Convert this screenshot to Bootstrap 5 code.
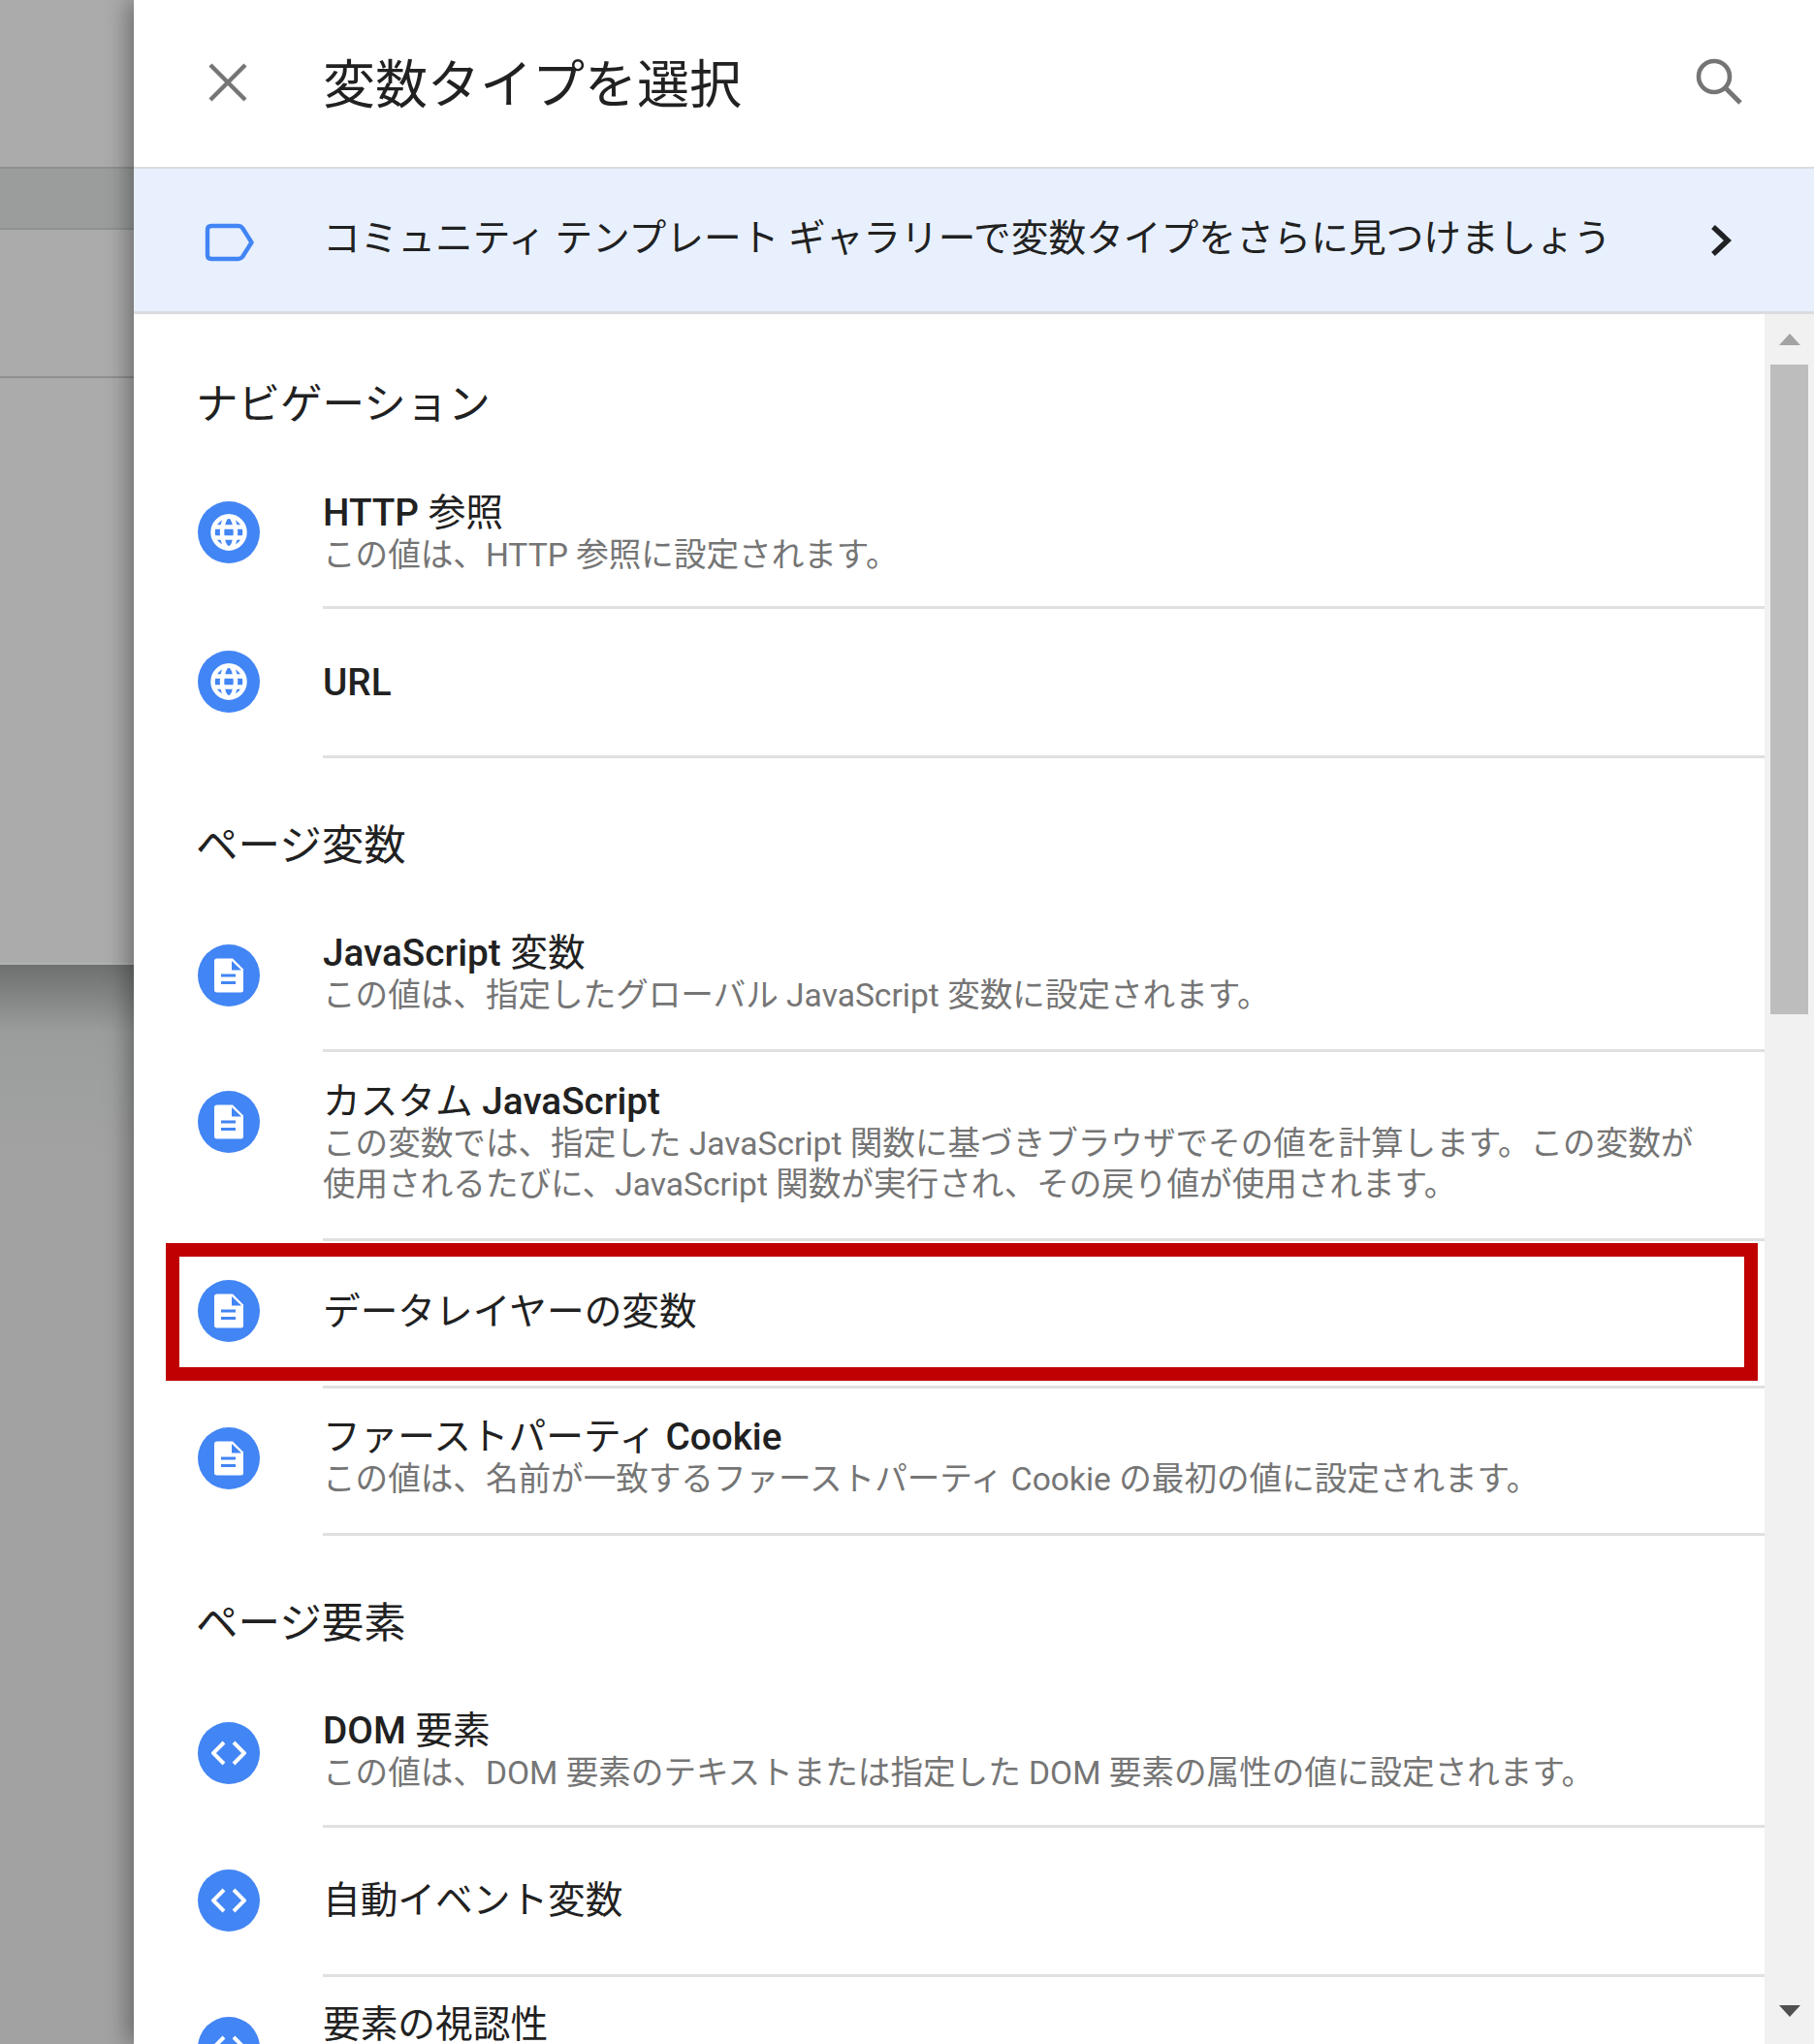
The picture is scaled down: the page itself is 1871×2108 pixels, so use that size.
<!DOCTYPE html>
<html lang="ja">
<head>
<meta charset="utf-8">
<title>変数タイプを選択</title>
<link rel="stylesheet" href="https://cdn.jsdelivr.net/npm/bootstrap@5.3.0/dist/css/bootstrap.min.css">
<style>
html,body{height:2108px;overflow:hidden}
body{font-family:Roboto,"Noto Sans CJK JP",sans-serif;color:#212121;background:#a5a5a5}
.stage{height:2108px;width:1871px}
.bd-pane{width:138px;flex:none}
.bd-top{height:172px;background:#ababab}
.bd-band{height:65px;background:#9b9d9d;border-top:2px solid #8f9090;border-bottom:2px solid #8f9090}
.bd-mid{height:153px;background:#ababab;border-bottom:2px solid #8f8f8f}
.bd-low{height:605px;background:#ababab;border-bottom:2px solid #afb2b0}
.bd-rest{flex:1 1 auto;background:linear-gradient(#6e7070,#9b9d9d 70px,#a2a2a2 200px)}
.panel{width:1733px;flex:none;background:#fff;box-shadow:-6px 0 22px rgba(0,0,0,.36);position:relative}
.head-bar{height:172px;flex:none}
.x-slot{width:195px;padding-left:77px;flex:none;padding-bottom:3px}
.sheet-title{font-size:54px;line-height:70px;font-weight:400;margin:0;padding-top:5px;color:#212121}
.search-slot{margin-right:74px;padding-bottom:5px}
.promo{height:152px;flex:none;background:#e8f0fe;border-top:2px solid #dadce0;border-bottom:3px solid #dadce0}
.promo-ico{width:195px;padding-left:73px;flex:none;padding-top:4px}
.promo-text{font-size:38.7px;line-height:50px;color:#212121;padding-bottom:4px}
.promo-go{margin-right:84px}
.list-pane{width:1682px;flex:none;overflow:hidden}
.sec-head{font-size:43.5px;line-height:56px;margin:0;font-weight:400;padding-left:64px;color:#212121}
.sh1{height:150px;padding-top:66px}
.sh2{height:149px;padding-top:63px}
.sh3{height:147px;padding-top:63px}
.v-row{position:relative;height:154px}
.v-ico{width:195px;padding-left:66px;flex:none}
.ic-disc{width:64px;height:64px;border-radius:50%;background:#4285f4}
.v-body{flex:1 1 auto;border-bottom:3px solid #e0e0e3}
.v-name{font-size:38.7px;line-height:46px}
.lat{font-weight:500}
.v-desc{font-size:33.6px;line-height:42px;color:#757575;padding-right:70px}
.tall{height:195px}
.r1 .v-ico{padding-top:43px}.r1 .v-body{padding-top:32px}
.r2 .v-ico{padding-top:43px}.r2 .v-body{padding-top:53px}
.r3 .v-ico{padding-top:43px}.r3 .v-body{padding-top:29px}
.r4 .v-ico{padding-top:40px}.r4 .v-body{padding-top:28px}
.r5{height:152px}.r5 .v-ico{padding-top:40px}.r5 .v-body{padding-top:50px}
.r6{height:152px}.r6 .v-ico{padding-top:40px}.r6 .v-body{padding-top:27px}
.r7 .v-ico{padding-top:45px}.r7 .v-body{padding-top:31px}
.r8 .v-ico{padding-top:43px}.r8 .v-body{padding-top:52px}
.r9 .v-ico{padding-top:41px}.r9 .v-body{padding-top:26px}
.red-box{position:absolute;left:33px;top:2px;width:1642px;height:142px;border:14px solid #c00000;pointer-events:none}
.sbar{width:51px;flex:none;background:#f1f1f1}
.sb-up{height:52px;flex:none}
.sb-thumb{height:670px;width:39px;margin-left:6px;background:#bdbdbd;flex:none}
.sb-gap{flex:1 1 auto}
.sb-down{height:40px;flex:none}
</style>
</head>
<body>
<div class="stage d-flex">
  <div class="bd-pane d-flex flex-column">
    <div class="bd-top"></div>
    <div class="bd-band"></div>
    <div class="bd-mid"></div>
    <div class="bd-low"></div>
    <div class="bd-rest"></div>
  </div>
  <div class="panel d-flex flex-column">
    <div class="head-bar d-flex align-items-center">
      <div class="x-slot d-flex"><svg width="40" height="40" viewBox="0 0 40 40"><path d="M2 2 38 38M38 2 2 38" stroke="#757575" stroke-width="4.4" fill="none"/></svg></div>
      <h1 class="sheet-title flex-grow-1">変数タイプを選択</h1>
      <div class="search-slot d-flex"><svg width="48" height="48" viewBox="0 0 48 48"><circle cx="19" cy="19" r="16" stroke="#757575" stroke-width="4.6" fill="none"/><path d="M30.5 30.5 46 46" stroke="#757575" stroke-width="5" fill="none"/></svg></div>
    </div>
    <div class="promo d-flex align-items-center">
      <div class="promo-ico d-flex"><svg width="52" height="40" viewBox="0 0 52 40"><path d="M7 3H35Q37.500 3 39 5L48.500 20 39 35Q37.500 37 35 37H7Q3 37 3 33V7Q3 3 7 3Z" stroke="#4285f4" stroke-width="4.400" fill="none" stroke-linejoin="round"/></svg></div>
      <div class="promo-text flex-grow-1">コミュニティ テンプレート ギャラリーで変数タイプをさらに見つけましょう</div>
      <div class="promo-go d-flex"><svg width="24" height="34" viewBox="0 0 24 34"><path d="M4 3 19 17 4 31" stroke="#202124" stroke-width="5.500" fill="none"/></svg></div>
    </div>
    <div class="d-flex flex-grow-1 overflow-hidden">
      <div class="list-pane">
        <h2 class="sec-head sh1">ナビゲーション</h2>
        <div class="v-row r1 d-flex"><div class="v-ico"><div class="ic-disc d-flex align-items-center justify-content-center"><svg width="38" height="38" viewBox="0 0 38 38"><use href="#g-globe"/></svg></div></div><div class="v-body"><div class="v-name"><span class="lat">HTTP</span> 参照</div><div class="v-desc">この値は、HTTP 参照に設定されます。</div></div></div>
        <div class="v-row r2 d-flex"><div class="v-ico"><div class="ic-disc d-flex align-items-center justify-content-center"><svg width="38" height="38" viewBox="0 0 38 38"><use href="#g-globe"/></svg></div></div><div class="v-body"><div class="v-name"><span class="lat">URL</span></div></div></div>
        <h2 class="sec-head sh2">ページ変数</h2>
        <div class="v-row r3 d-flex"><div class="v-ico"><div class="ic-disc d-flex align-items-center justify-content-center"><svg width="36" height="36" viewBox="0 0 36 36"><use href="#g-doc"/></svg></div></div><div class="v-body"><div class="v-name"><span class="lat">JavaScript</span> 変数</div><div class="v-desc">この値は、指定したグローバル JavaScript 変数に設定されます。</div></div></div>
        <div class="v-row tall r4 d-flex"><div class="v-ico"><div class="ic-disc d-flex align-items-center justify-content-center"><svg width="36" height="36" viewBox="0 0 36 36"><use href="#g-doc"/></svg></div></div><div class="v-body"><div class="v-name">カスタム <span class="lat">JavaScript</span></div><div class="v-desc">この変数では、指定した JavaScript 関数に基づきブラウザでその値を計算します。この変数が使用されるたびに、JavaScript 関数が実行され、その戻り値が使用されます。</div></div></div>
        <div class="v-row r5 d-flex"><div class="v-ico"><div class="ic-disc d-flex align-items-center justify-content-center"><svg width="36" height="36" viewBox="0 0 36 36"><use href="#g-doc"/></svg></div></div><div class="v-body"><div class="v-name">データレイヤーの変数</div></div><div class="red-box"></div></div>
        <div class="v-row r6 d-flex"><div class="v-ico"><div class="ic-disc d-flex align-items-center justify-content-center"><svg width="36" height="36" viewBox="0 0 36 36"><use href="#g-doc"/></svg></div></div><div class="v-body"><div class="v-name">ファーストパーティ <span class="lat">Cookie</span></div><div class="v-desc">この値は、名前が一致するファーストパーティ Cookie の最初の値に設定されます。</div></div></div>
        <h2 class="sec-head sh3">ページ要素</h2>
        <div class="v-row r7 d-flex"><div class="v-ico"><div class="ic-disc d-flex align-items-center justify-content-center"><svg width="36" height="36" viewBox="0 0 36 36"><use href="#g-code"/></svg></div></div><div class="v-body"><div class="v-name"><span class="lat">DOM</span> 要素</div><div class="v-desc">この値は、DOM 要素のテキストまたは指定した DOM 要素の属性の値に設定されます。</div></div></div>
        <div class="v-row r8 d-flex"><div class="v-ico"><div class="ic-disc d-flex align-items-center justify-content-center"><svg width="36" height="36" viewBox="0 0 36 36"><use href="#g-code"/></svg></div></div><div class="v-body"><div class="v-name">自動イベント変数</div></div></div>
        <div class="v-row r9 d-flex"><div class="v-ico"><div class="ic-disc d-flex align-items-center justify-content-center"><svg width="36" height="36" viewBox="0 0 36 36"><use href="#g-code"/></svg></div></div><div class="v-body"><div class="v-name">要素の視認性</div></div></div>
      </div>
      <div class="sbar d-flex flex-column">
        <div class="sb-up d-flex align-items-center justify-content-center"><svg width="22" height="12" viewBox="0 0 22 12"><path d="M11 0 22 12H0Z" fill="#a3a3a3"/></svg></div>
        <div class="sb-thumb"></div>
        <div class="sb-gap"></div>
        <div class="sb-down d-flex align-items-start justify-content-center"><svg width="22" height="12" viewBox="0 0 22 12"><path d="M0 0H22L11 12Z" fill="#505050"/></svg></div>
      </div>
    </div>
  </div>
</div>
<svg width="0" height="0" class="position-absolute">
  <defs>
    <g id="g-globe" fill="none" stroke="#fff" stroke-width="4.500">
      <circle cx="19" cy="19" r="16.500"/>
      <ellipse cx="19" cy="19" rx="7" ry="16.500"/>
      <path d="M3 13.500H35M3 24.500H35"/>
    </g>
    <g id="g-doc">
      <path d="M6 .5H22L33 11.500V33Q33 35.500 30.500 35.500H6Q3 35.500 3 33V3Q3 .5 6 .5Z" fill="#fff"/>
      <path d="M21 3V12.500H31Z" fill="#4285f4"/>
      <path d="M10 18H25M10 25.500H25" stroke="#4285f4" stroke-width="3"/>
    </g>
    <g id="g-code" fill="none" stroke="#fff" stroke-width="4">
      <path d="M13 7 2 18 13 29M23 7 34 18 23 29"/>
    </g>
  </defs>
</svg>
<script src="https://cdn.jsdelivr.net/npm/bootstrap@5.3.0/dist/js/bootstrap.bundle.min.js"></script>
</body>
</html>
